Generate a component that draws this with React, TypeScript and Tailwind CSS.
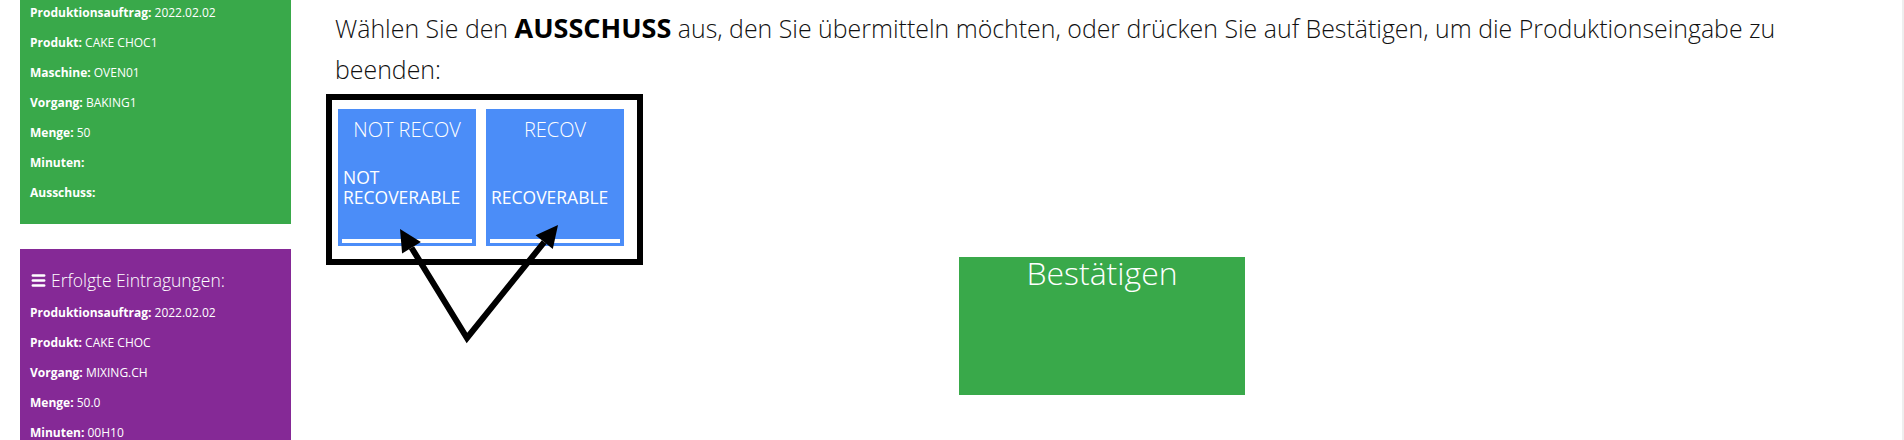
import { Menu } from 'lucide-react';

const current = [
  ['Produktionsauftrag:', '2022.02.02'],
  ['Produkt:', 'CAKE CHOC1'],
  ['Maschine:', 'OVEN01'],
  ['Vorgang:', 'BAKING1'],
  ['Menge:', '50'],
  ['Minuten:', ''],
  ['Ausschuss:', ''],
];

const done = [
  ['Produktionsauftrag:', '2022.02.02'],
  ['Produkt:', 'CAKE CHOC'],
  ['Vorgang:', 'MIXING.CH'],
  ['Menge:', '50.0'],
  ['Minuten:', '00H10'],
];

const scrapTypes = [
  { code: 'NOT RECOV', label: ['NOT', 'RECOVERABLE'] },
  { code: 'RECOV', label: ['RECOVERABLE'] },
];

function InfoRow({ label, value }: { label: string; value: string }) {
  return (
    <p className="text-[12px] leading-[30px] h-[30px] whitespace-nowrap">
      <b className="font-bold">{label}</b> {value}
    </p>
  );
}

function ScrapTile({ code, label }: { code: string; label: string[] }) {
  return (
    <button className="w-[138px] h-[137px] bg-[#4b8df8] text-white flex flex-col text-left">
      <div className="pt-[8px] text-center text-[20px] font-light leading-[26px] whitespace-nowrap">{code}</div>
      <div className="h-[64px] flex flex-col justify-end px-[5px] text-[17.5px] font-medium leading-[20px]">
        {label.map((l) => (
          <span key={l}>{l}</span>
        ))}
      </div>
      <div className="mt-auto mb-[3px] mx-[4px] h-[4px] bg-white" />
    </button>
  );
}

export default function App() {
  return (
    <div className="relative w-full h-[440px] overflow-hidden bg-white flex font-['Open_Sans',sans-serif] text-[#222]">
      <aside className="w-[320px] shrink-0 pl-[20px] pr-[29px]">
        <div className="bg-[#39a94a] text-white px-[10px] pb-[16px]">
          <div className="-mt-[2px]">
            {current.map(([l, v]) => (
              <InfoRow key={l} label={l} value={v} />
            ))}
          </div>
        </div>

        <div className="mt-[25px] bg-[#852996] text-white px-[10px] pt-[19px] pb-[20px]">
          <h3 className="flex items-center gap-[4px] text-[17.5px] font-light leading-[24px] mb-[6px]">
            <Menu size={17} strokeWidth={3.5} />
            Erfolgte Eintragungen:
          </h3>
          {done.map(([l, v]) => (
            <InfoRow key={l} label={l} value={v} />
          ))}
        </div>
      </aside>

      <main className="w-[1564px] shrink-0">
        <p className="mt-[8px] ml-[15px] pr-[74px] text-[24.9px] font-light leading-[41px] text-[#111]">
          Wählen Sie den <b className="font-bold text-[27px] leading-[0] text-black">AUSSCHUSS</b> aus, den Sie übermitteln möchten, oder drücken Sie auf Bestätigen, um die Produktionseingabe zu beenden:
        </p>

        <div className="mt-[19px] ml-[18px] flex gap-[10px]">
          {scrapTypes.map((s) => (
            <ScrapTile key={s.code} code={s.code} label={s.label} />
          ))}
        </div>

        <div className="mt-[11px] mx-auto w-[286px] h-[138px] bg-[#39a94a] text-white text-center">
          <div className="text-[32px] font-light leading-[32px]">Bestätigen</div>
        </div>
      </main>

      <div className="flex-1 border-r-2 border-[#eeeeee]" />

      {/* annotation: frame + arrows */}
      <div className="absolute left-[326px] top-[94px] w-[317px] h-[171px] border-[6px] border-black pointer-events-none" />
      <svg className="absolute left-0 top-0 pointer-events-none" width="700" height="440">
        <polyline
          points="411.5,247.7 467,338 544.2,242.1"
          fill="none"
          stroke="black"
          strokeWidth="6"
          strokeLinejoin="miter"
        />
        <polygon points="400,229 420.9,241.9 402.1,253.5" fill="black" />
        <polygon points="558,225 552.8,249 535.6,235.2" fill="black" />
      </svg>
    </div>
  );
}
